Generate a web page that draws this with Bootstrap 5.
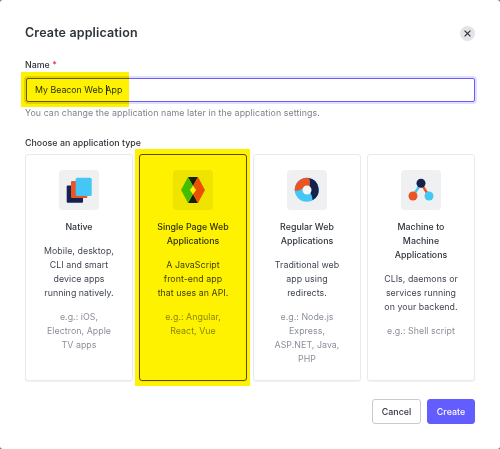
<!DOCTYPE html>
<html lang="en">
<head>
<meta charset="utf-8">
<title>Create application</title>
<link href="https://cdn.jsdelivr.net/npm/bootstrap@5.3.0/dist/css/bootstrap.min.css" rel="stylesheet">
<style>
html,body{height:449px;overflow:hidden}
body{background:#6f7178;font-family:Inter,"Liberation Sans",sans-serif;color:#2d333a}
.dlg{position:relative;width:500px;height:449px;background:#fff;border-radius:3px;padding:22px 25px 0;box-sizing:border-box}
.dlg-title{font-size:12.5px;font-weight:600;line-height:22px;letter-spacing:.14px;margin:0;color:#2d333a}
.dlg-close{width:15px;height:15px;border-radius:50%;background:#e3e4e6;border:0;padding:0}
.dlg-close svg{display:block;margin:auto}
.head-row{margin-bottom:14px}
.name-label{font-size:8.8px;font-weight:500;line-height:14px;margin:0 0 6px;letter-spacing:.05px;color:#2d333a}
.req{color:#e0354a}
.name-input.form-control{height:24px;margin:0 0 0 1px;width:449px;border:1px solid #6a5cff;border-radius:2px;box-shadow:0 0 0 2px #e2dfff;font-size:8.8px;line-height:21px;padding:0 8px;color:#2d333a}
.caret-bar{display:inline-block;width:1px;height:10px;background:#2d333a;vertical-align:-2px;margin-right:-1px}
.hint{font-size:8.8px;line-height:14px;color:#7d828c;letter-spacing:.1px;margin-top:4px}
.type-label{font-size:8.8px;font-weight:500;line-height:14px;margin:16px 0 5px;letter-spacing:.05px}
.app-grid{display:grid;grid-template-columns:repeat(4,108px);column-gap:6px;margin-top:-1px}
.app-card.card{height:227px;border:1px solid #e9eaec;border-radius:3px;padding:15px 16px 0;text-align:center;box-shadow:0 1px 1px #f2f2f3;--bs-card-bg:#fff}
.app-card.picked{border-color:#5c4dff}
.tile{width:40px;height:40px;background:#eff0f2;border-radius:4px;margin:0 auto 10px;display:flex;align-items:center;justify-content:center;flex-shrink:0}
.app-name{font-size:8.8px;font-weight:500;line-height:14px;letter-spacing:.03px;margin:0 0 10px;color:#2d333a}
.app-desc{font-size:8.8px;line-height:14px;letter-spacing:.06px;color:#3f4550;margin:0 0 10px}
.app-eg{font-size:8.8px;line-height:14px;letter-spacing:.06px;color:#8a8f98;margin:0}
.btn.foot-btn{font-size:8.8px;font-weight:500;height:25px;padding:0;line-height:23px;border-radius:3px;letter-spacing:.05px}
.foot-cancel.btn{width:49px;background:#fff;border:1px solid #c9cace;color:#2d333a}
.foot-create.btn{width:48px;background:#635dff;border:1px solid #635dff;color:#fff}
.foot{margin-top:18px;column-gap:6px}
.hl{position:absolute;background:#fff200;mix-blend-mode:multiply;pointer-events:none}
.hl-name{left:21px;top:72px;width:108px;height:35px}
.hl-card{left:135px;top:149px;width:115px;height:237px}
</style>
</head>
<body>
<div class="dlg">
  <div class="head-row d-flex justify-content-between align-items-center">
    <h1 class="dlg-title">Create application</h1>
    <button type="button" class="dlg-close d-flex align-items-center" aria-label="Close">
      <svg width="7" height="7" viewBox="0 0 7 7"><path d="M.6.6l5.8 5.8M6.4.6L.6 6.4" stroke="#2d333a" stroke-width="1.2" fill="none"/></svg>
    </button>
  </div>
  <label class="name-label d-block" for="appn">Name <span class="req">*</span></label>
  <div class="form-control name-input" id="appn" role="textbox">My Beacon Web <span class="caret-bar"></span>App</div>
  <div class="hint">You can change the application name later in the application settings.</div>
  <div class="type-label">Choose an application type</div>
  <div class="app-grid">
    <div class="card app-card">
      <div class="tile">
        <svg width="26" height="26" viewBox="0 0 26 26">
          <rect x="0.7" y="8.6" width="16.3" height="17.1" rx="1" fill="#16214d"/>
          <rect x="5" y="4" width="16.3" height="17" rx="1" fill="#eb5424"/>
          <rect x="9.7" y="0.7" width="16" height="18.3" rx="1.5" fill="#44c7f4"/>
        </svg>
      </div>
      <div class="app-name">Native</div>
      <p class="app-desc">Mobile, desktop, CLI and smart device apps running natively.</p>
      <p class="app-eg">e.g.: iOS, Electron, Apple TV apps</p>
    </div>
    <div class="card app-card picked">
      <div class="tile">
        <svg width="26" height="26" viewBox="0 0 26 26">
          <path d="M8 0H18L13 9Z" fill="#16214d"/>
          <path d="M8 26H18L13 17Z" fill="#16214d"/>
          <path d="M8 0L1 13L8 26L13 17L10 13L13 9Z" fill="#44c7f4"/>
          <path d="M18 0L25 13L18 26L13 17L16 13L13 9Z" fill="#eb5424"/>
          <path d="M13 9L16 13L13 17L10 13Z" fill="#fff"/>
        </svg>
      </div>
      <div class="app-name">Single Page Web Applications</div>
      <p class="app-desc">A JavaScript front-end app that uses an API.</p>
      <p class="app-eg">e.g.: Angular, React, Vue</p>
    </div>
    <div class="card app-card">
      <div class="tile">
        <svg width="26" height="26" viewBox="0 0 26 26">
          <circle cx="12.7" cy="12.8" r="12" fill="#44c7f4"/>
          <path d="M.8 13.8A12 12 0 0 1 15 1C16.5 4 16 7 15.5 9.5L8.5 11.5C6 13.5 3.5 14 .8 13.8Z" fill="#eb5424"/>
          <path d="M15 1A12 12 0 0 1 18.5 23.3C18.5 20.5 17.5 18 16.5 16L15.5 9.5C16 7 16.5 4 15 1Z" fill="#16214d"/>
          <circle cx="13" cy="13" r="4.5" fill="#f5f6f7"/>
        </svg>
      </div>
      <div class="app-name">Regular Web Applications</div>
      <p class="app-desc">Traditional web app using redirects.</p>
      <p class="app-eg">e.g.: Node.js Express, ASP.NET, Java, PHP</p>
    </div>
    <div class="card app-card">
      <div class="tile">
        <svg width="26" height="26" viewBox="0 0 26 26">
          <path d="M13 6.3L5 19" stroke="#44c7f4" stroke-width="2.4" fill="none"/>
          <path d="M13 6.3L21 19" stroke="#eb5424" stroke-width="2.4" fill="none"/>
          <circle cx="13" cy="6.3" r="4.5" fill="#16214d"/>
          <circle cx="5" cy="19" r="4.5" fill="#eb5424"/>
          <circle cx="21" cy="19" r="4.5" fill="#44c7f4"/>
        </svg>
      </div>
      <div class="app-name">Machine to Machine Applications</div>
      <p class="app-desc">CLIs, daemons or services running on your backend.</p>
      <p class="app-eg">e.g.: Shell script</p>
    </div>
  </div>
  <div class="foot d-flex justify-content-end">
    <button type="button" class="btn foot-btn foot-cancel">Cancel</button>
    <button type="button" class="btn foot-btn foot-create">Create</button>
  </div>
  <div class="hl hl-name"></div>
  <div class="hl hl-card"></div>
</div>
<script src="https://cdn.jsdelivr.net/npm/bootstrap@5.3.0/dist/js/bootstrap.bundle.min.js"></script>
</body>
</html>
